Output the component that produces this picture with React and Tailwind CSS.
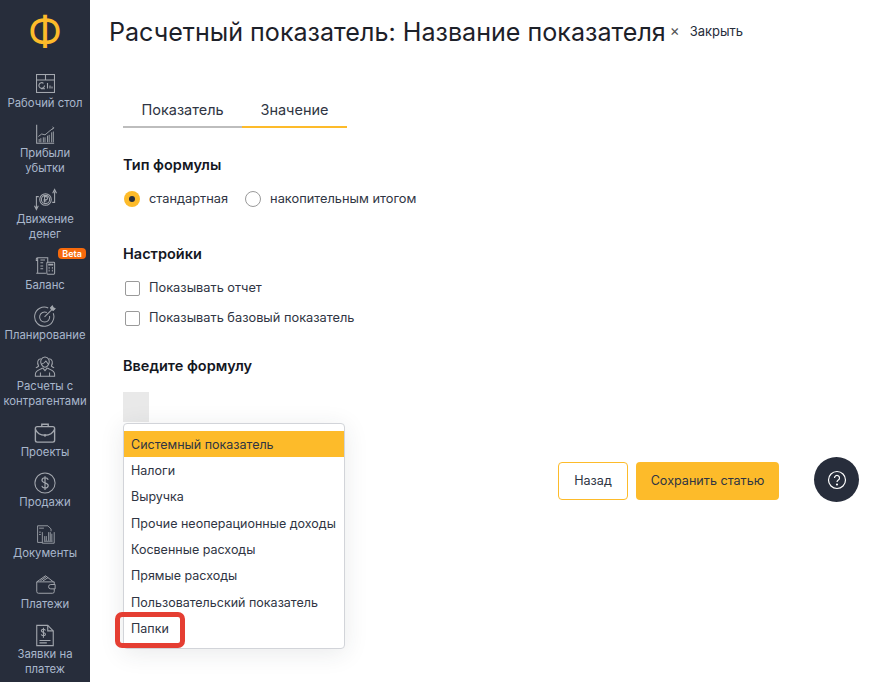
import { useState } from 'react'

const iconProps = {
  width: 22,
  height: 22,
  viewBox: '0 0 24 24',
  fill: 'none',
  stroke: '#a3a7ae',
  strokeWidth: 1.100,
}

const DeskIcon = () => (
  <svg {...iconProps} width={19} height={19} viewBox="0 0 19 19">
    <rect x="0.500" y="0.500" width="18" height="18" />
    <path d="M0.500 6h18M9.500 0.500V6" />
    <path d="M8.500 11.500a2.800 2.800 0 1 1-1-2.200M5 14.800h4" />
    <path d="M11.500 9v5.500M14 11.500v3M16 12.500v2" />
  </svg>
)

const ProfitIcon = () => (
  <svg {...iconProps} width={20} height={20}>
    <path d="M2 1v22h21" strokeWidth="1.300" />
    <path d="M4 15l4-3 4 1 6-5 4-3" />
    <path d="M21 3.500l1.500 1-1.500 2" />
    <path d="M5 22v-4M7 22v-5M10 22v-6M12 22v-6M15 22v-8M17 22v-9M20 22V10M22 22V9" />
  </svg>
)

const MoneyIcon = () => (
  <svg {...iconProps} width={23} height={24}>
    <circle cx="12" cy="11.500" r="6" />
    <circle cx="12" cy="11.500" r="4.300" />
    <path d="M11 14.500v-6h1.500a1.500 1.500 0 0 1 0 3.200H10M10 13h3" />
    <path d="M5 8.500H2.500V21M0.500 18l2 4 2-4" />
    <path d="M19 14.500h2.500V3M19.500 5l2-4 2 4" />
  </svg>
)

const BalanceIcon = () => (
  <svg {...iconProps}>
    <path d="M4 3h11v5M4 3a1.500 1.500 0 0 0-1.500 1.500V6H4M4 3v17H2.500M13 20H4" />
    <path d="M7 5.500h5M7 8.500h3M7 12h3M7 15h3" />
    <rect x="14" y="8" width="8.500" height="13" rx="1" />
    <path d="M15.500 10.500h5.500M16 14h1M19.500 14h1M16 17h1M19.500 17h1" strokeWidth="2" />
  </svg>
)

const PlanIcon = () => (
  <svg {...iconProps}>
    <path d="M15.500 3.200A10.500 10.500 0 1 0 21 9" />
    <path d="M14 8.200A5.500 5.500 0 1 0 17 12" />
    <path d="M11.500 13l8-8" />
    <path d="M18 3l1 2 2 1 2-2-2-1-1-2z" fill="#a3a7ae" />
  </svg>
)

const PartnersIcon = () => (
  <svg {...iconProps}>
    <path d="M8 3.500a4.500 4.500 0 0 1 8 0c1 2 .5 5-1 7a3.500 3.500 0 0 1-6 0c-1.500-2-2-5-1-7z" />
    <path d="M8 9c2-.5 4-2 5-3.500 1 1.500 2 3 3 3.500" />
    <path d="M9.500 13c-2 2-8 2-8 7v2h21v-2c0-5-6-5-8-7" />
    <path d="M7 22v-4M17 22v-4M9.500 13l2.500 3 2.500-3" />
    <path d="M7.500 3C4 3 3 7 5 11c-1 1-2 1.500-3 2M16.500 3c3.500 0 4.500 4 2.500 8 1 1 2 1.500 3 2" />
  </svg>
)

const ProjectsIcon = () => (
  <svg {...iconProps} strokeWidth={1.500}>
    <path d="M8.500 5V2.500h7V5" />
    <rect x="1.500" y="5" width="21" height="17" rx="2" />
    <path d="M1.500 8c2 5 7 6.500 10.500 6.500S20.500 13 22.500 8" />
    <path d="M12 13v3" />
  </svg>
)

const SalesIcon = () => (
  <svg {...iconProps}>
    <circle cx="12" cy="12" r="11" />
    <path d="M15.500 8.500c-.5-1.500-1.900-2.200-3.500-2.200-2 0-3.300 1.100-3.300 2.700 0 3.600 6.800 2.200 6.800 5.800 0 1.600-1.500 2.700-3.500 2.700-1.700 0-3-.8-3.500-2.300M12 4.500v15" strokeWidth="1.300" />
  </svg>
)

const DocsIcon = () => (
  <svg {...iconProps} width={19} height={21}>
    <path d="M15 1H2v21h6" />
    <path d="M15 1l4 4v3M4 4h6" />
    <path d="M8 9v14h15V9" />
    <path d="M11 20v-6M13 20v-6M16 20V9M18 20V9M20 20v-9M10 20.500h11" />
    <path d="M4 9h2M4 12h2" />
  </svg>
)

const WalletIcon = () => (
  <svg {...iconProps} width={21} height={21}>
    <path d="M2 9v11a2 2 0 0 0 2 2h16a2 2 0 0 0 2-2v-3M22 12V9H2" />
    <path d="M2 9l10-7 9 7M6 8l7-5M9 8l6-4" />
    <path d="M23 12h-5a2.500 2.500 0 0 0 0 5h5v-5z" />
  </svg>
)

const RequestIcon = () => (
  <svg {...iconProps} width={22} height={23} strokeWidth={1.200}>
    <path d="M3 1h12l6 6v16H3z" />
    <path d="M15 1v6h6" />
    <path d="M12.500 6.500c-.3-.9-1.200-1.300-2.200-1.300-1.300 0-2.300.7-2.300 1.700 0 2.300 4.500 1.300 4.500 3.600 0 1-1 1.700-2.300 1.700-1.100 0-2-.5-2.300-1.400M10.300 3.500v11" />
    <path d="M6 17.500h12M6 20h8" />
  </svg>
)

const navItems = [
  { icon: DeskIcon, label: ['Рабочий стол'] },
  { icon: ProfitIcon, label: ['Прибыли', 'убытки'] },
  { icon: MoneyIcon, label: ['Движение', 'денег'] },
  { icon: BalanceIcon, label: ['Баланс'], beta: true },
  { icon: PlanIcon, label: ['Планирование'] },
  { icon: PartnersIcon, label: ['Расчеты с', 'контрагентами'] },
  { icon: ProjectsIcon, label: ['Проекты'] },
  { icon: SalesIcon, label: ['Продажи'] },
  { icon: DocsIcon, label: ['Документы'] },
  { icon: WalletIcon, label: ['Платежи'] },
  { icon: RequestIcon, label: ['Заявки на', 'платеж'] },
]

const formulaOptions = [
  'Системный показатель',
  'Налоги',
  'Выручка',
  'Прочие неоперационные доходы',
  'Косвенные расходы',
  'Прямые расходы',
  'Пользовательский показатель',
  'Папки',
]

function Sidebar() {
  return (
    <aside className="flex h-full w-[90px] shrink-0 flex-col items-center overflow-hidden bg-[#272d3b]">
      <div className="flex h-[71.500px] w-full shrink-0 items-start justify-center pt-[16px]">
        <span className="text-[41px] leading-[30px] font-normal text-[#fdbb2a]">Ф</span>
      </div>
      <nav className="flex w-full flex-col gap-[11.700px]">
        {navItems.map((item) => (
          <a key={item.label[0]} href="#" className="relative flex flex-col items-center">
            <span className="flex h-[24px] items-center justify-center">
              <item.icon />
            </span>
            {item.label.map((line) => (
              <span
                key={line}
                className="text-[11.300px] leading-[15px] whitespace-nowrap text-[#a9b7cc]"
              >
                {line}
              </span>
            ))}
            {item.beta ? (
              <span className="absolute top-[-6px] right-[4px] rounded-[4px] bg-[#f76a0c] px-[4px] text-[9px] leading-[11px] font-semibold text-white">
                Beta
              </span>
            ) : null}
          </a>
        ))}
      </nav>
    </aside>
  )
}

function App() {
  const [tab, setTab] = useState('value')
  const [formulaType, setFormulaType] = useState('standard')

  return (
    <div className="flex h-screen overflow-hidden bg-white font-['Inter','Noto_Sans',sans-serif] text-[#2f3543]">
      <Sidebar />

      <main className="relative min-w-0 flex-1 pl-[19px]">
        <header className="flex h-[64px] items-start pt-[17px]">
          <h1 className="text-[25.100px] leading-[30px] font-normal whitespace-nowrap text-[#1d2129]">
            Расчетный показатель: Название показателя
          </h1>
          <button type="button" className="ml-[4px] flex items-center pt-[2px] text-[13px] leading-[24px] text-[#272d3b]">
            <span className="text-[15px] leading-[24px] text-[#555]">×</span>
            <span className="ml-[10px]">Закрыть</span>
          </button>
        </header>

        <div className="pl-[14px]">
          <div className="mt-[30px] flex h-[34px] w-[224px] text-[14.500px]">
            <button
              type="button"
              onClick={() => setTab('indicator')}
              className="w-[119px] border-b-2 border-[#bdbdbd] pb-[1px]"
            >
              Показатель
            </button>
            <button
              type="button"
              onClick={() => setTab('value')}
              className={[
                'w-[105px] border-b-2 pb-[1px]',
                tab === 'value' ? 'border-[#fdbb2a]' : 'border-[#bdbdbd]',
              ].join(' ')}
            >
              Значение
            </button>
          </div>

          <h2 className="mt-[27px] text-[14.500px] leading-[20px] font-semibold text-[#14171f]">Тип формулы</h2>
          <div className="mt-[14px] flex h-[20px] items-center text-[12.800px]">
            <label className="flex items-center" onClick={() => setFormulaType('standard')}>
              <span className="ml-[1px] flex h-[16px] w-[16px] items-center justify-center rounded-full bg-[#fdbb2a]">
                {formulaType === 'standard' ? (
                  <span className="h-[6px] w-[6px] rounded-full bg-[#272d3b]" />
                ) : null}
              </span>
              <span className="ml-[9px]">стандартная</span>
            </label>
            <label className="ml-[17px] flex items-center" onClick={() => setFormulaType('total')}>
              <span className="h-[16px] w-[16px] rounded-full border border-[#9a9a9a] bg-white" />
              <span className="ml-[9px]">накопительным итогом</span>
            </label>
          </div>

          <h2 className="mt-[35px] text-[14.500px] leading-[20px] font-semibold text-[#14171f]">Настройки</h2>
          <label className="mt-[14px] flex h-[20px] items-center text-[12.800px]">
            <span className="ml-[2px] h-[15px] w-[15px] rounded-[2px] border border-[#9a9a9a]" />
            <span className="ml-[9px]">Показывать отчет</span>
          </label>
          <label className="mt-[10px] flex h-[20px] items-center text-[12.800px]">
            <span className="ml-[2px] h-[15px] w-[15px] rounded-[2px] border border-[#9a9a9a]" />
            <span className="ml-[9px]">Показывать базовый показатель</span>
          </label>

          <h2 className="mt-[28px] text-[14.500px] leading-[20px] font-semibold text-[#14171f]">Введите формулу</h2>
          <div className="mt-[16px] h-[30px] w-[26px] bg-[#e9e9e9]" />

          <div className="mt-[40px] flex w-[656px] justify-end gap-[8px] text-[12.600px]">
            <button type="button" className="h-[38px] w-[70px] rounded-[4px] border border-[#fdbb2a] bg-white">
              Назад
            </button>
            <button type="button" className="h-[38px] w-[143px] rounded-[4px] bg-[#fdbb2a]">
              Сохранить статью
            </button>
          </div>
        </div>

        <div className="absolute top-[423px] left-[33px] w-[222px] rounded-[4px] border border-[#d2d4d9] bg-white py-[7px] text-[12.500px] text-[#2f3543] shadow-[0_4px_24px_rgba(39,45,59,0.10)]">
          {formulaOptions.map((option, index) => (
            <div
              key={option}
              className={[
                'flex h-[26.300px] items-center px-[7px] pt-[2px] whitespace-nowrap',
                index === 0 ? 'bg-[#fdbb2a]' : '',
              ].join(' ')}
            >
              {option}
            </div>
          ))}
        </div>

        {/* annotation around the last option */}
        <div className="absolute top-[612px] left-[25px] h-[36px] w-[70px] rounded-[7px] border-[5px] border-[#e53e32]" />

        <button
          type="button"
          className="absolute top-[457px] left-[724px] flex h-[45px] w-[45px] items-center justify-center rounded-full bg-[#272d3b]"
        >
          <svg width="20" height="20" viewBox="0 0 20 20" fill="none" stroke="#ffffff" strokeWidth="1.200">
            <circle cx="10" cy="10" r="8.500" />
            <path d="M7.500 8a2.500 2.500 0 1 1 3.800 2.100c-.9.600-1.300 1-1.300 2" />
            <circle cx="10" cy="14.500" r="0.500" fill="#ffffff" />
          </svg>
        </button>
      </main>
    </div>
  )
}

export default App
